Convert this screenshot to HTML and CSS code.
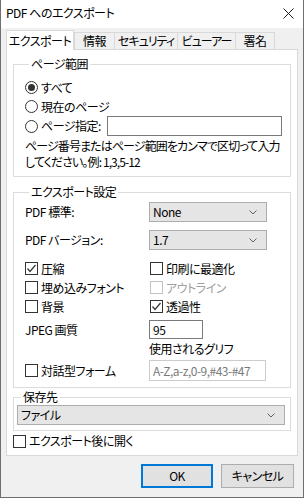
FILE: index.html
```html
<!DOCTYPE html>
<html lang="ja">
<head>
    <meta charset="UTF-8">
    <title>PDF へのエクスポート</title>
    <link rel="stylesheet" href="styles.css">
</head>
<body>
<div class="window">
    <div class="titlebar">
        <span class="title">PDF へのエクスポート</span>
        <svg class="close" width="11" height="11" viewBox="0 0 11 11">
            <path d="M0.5 0.5 L10.5 10.5 M10.5 0.5 L0.5 10.5" stroke="#1a1a1a" stroke-width="1" fill="none"/>
        </svg>
    </div>

    <div class="tabs">
        <div class="tab active">エクスポート</div>
        <div class="tab first w-info">情報</div>
        <div class="tab w-sec">セキュリティ</div>
        <div class="tab w-view">ビューアー</div>
        <div class="tab w-sign">署名</div>
    </div>

    <div class="panel">
        <!--ページ範囲-->
        <fieldset class="group range">
            <legend>ページ範囲</legend>
            <div class="radio-row"><span class="radio on"></span>すべて</div>
            <div class="radio-row"><span class="radio"></span>現在のページ</div>
            <div class="radio-row spec">
                <span class="radio"></span>ページ指定:
                <span class="textbox pages"></span>
            </div>
            <p class="hint">ページ番号またはページ範囲をカンマで区切って入力<br>してください。例: 1,3,5-12</p>
        </fieldset>

        <!--エクスポート設定-->
        <fieldset class="group settings">
            <legend>エクスポート設定</legend>
            <div class="row sel-row first-sel">
                <div class="col">PDF 標準:</div>
                <div class="select small">None<svg class="chev" width="8" height="5" viewBox="0 0 8 5"><polyline points="0.5,0.5 4,4 7.5,0.5" fill="none" stroke="#606060"/></svg></div>
            </div>
            <div class="row sel-row">
                <div class="col">PDF バージョン:</div>
                <div class="select small">1.7<svg class="chev" width="8" height="5" viewBox="0 0 8 5"><polyline points="0.5,0.5 4,4 7.5,0.5" fill="none" stroke="#606060"/></svg></div>
            </div>
            <div class="row chk-row first-chk">
                <div class="col"><span class="box"><svg width="11" height="11" viewBox="0 0 11 11"><polyline points="1.5,5.5 4,8.5 9.5,2" fill="none" stroke="#333" stroke-width="1.2"/></svg></span>圧縮</div>
                <div class="col2"><span class="box"></span>印刷に最適化</div>
            </div>
            <div class="row chk-row">
                <div class="col"><span class="box"></span>埋め込みフォント</div>
                <div class="col2 disabled"><span class="box"></span>アウトライン</div>
            </div>
            <div class="row chk-row">
                <div class="col"><span class="box"></span>背景</div>
                <div class="col2"><span class="box"><svg width="11" height="11" viewBox="0 0 11 11"><polyline points="1.5,5.5 4,8.5 9.5,2" fill="none" stroke="#333" stroke-width="1.2"/></svg></span>透過性</div>
            </div>
            <div class="row jpeg-row">
                <div class="col">JPEG 画質</div>
                <div class="textbox jpeg">95</div>
            </div>
            <div class="row glyph-label">
                <div class="col"></div>
                <div>使用されるグリフ</div>
            </div>
            <div class="row form-row">
                <div class="col"><span class="box"></span>対話型フォーム</div>
                <div class="textbox glyphs">A-Z,a-z,0-9,#43-#47</div>
            </div>
        </fieldset>

        <!--保存先-->
        <fieldset class="group dest">
            <legend>保存先</legend>
            <div class="select wide">ファイル<svg class="chev" width="8" height="5" viewBox="0 0 8 5"><polyline points="0.5,0.5 4,4 7.5,0.5" fill="none" stroke="#606060"/></svg></div>
        </fieldset>

        <div class="open-row"><span class="box"></span>エクスポート後に開く</div>
    </div>

    <div class="buttons">
        <div class="btn default">OK</div>
        <div class="btn">キャンセル</div>
    </div>
</div>
</body>
</html>
```

FILE: styles.css
```css
* {
    margin: 0;
    padding: 0;
    box-sizing: border-box;
}

body {
    background: #f0f0f0;
    font-family: "Noto Sans CJK JP", "Noto Sans", sans-serif;
    font-size: 12px;
    font-feature-settings: "palt";
    letter-spacing: -0.5px;
    white-space: nowrap;
    color: #000;
}

.window {
    width: 304px;
    height: 498px;
    background: #f0f0f0;
    border-left: 1px solid #6f6f6f;
    border-right: 1px solid #6f6f6f;
    border-bottom: 1px solid #6f6f6f;
}

/*タイトルバー*/
.titlebar {
    height: 28px;
    background: #fff;
    display: flex;
    align-items: center;
    padding: 0 9px 2px 5px;
}

.title {
    line-height: 16px;
    flex: 1;
}

.close {
    display: block;
}

/*タブ*/
.tabs {
    display: flex;
    align-items: flex-end;
    height: 22px;
    padding-left: 5px;
    margin-bottom: -1px;
}

.tab {
    height: 17px;
    margin-bottom: 1px;
    border-top: 1px solid #d9d9d9;
    border-right: 1px solid #d9d9d9;
    background: #f0f0f0;
    text-align: center;
    line-height: 15px;
    overflow: hidden;
}

.tab.first {
    border-left: 1px solid #d9d9d9;
}

.tab.active {
    width: 68px;
    height: 20px;
    margin-bottom: 0;
    background: #fff;
    border: 1px solid #d9d9d9;
    border-bottom: none;
    line-height: 19px;
    position: relative;
    z-index: 1;
}

.w-info { width: 41px; }
.w-sec { width: 63px; letter-spacing: -1px; }
.w-view { width: 58px; letter-spacing: -1px; }
.w-sign { width: 39px; }

/*パネル*/
.panel {
    height: 407px;
    margin: 0 5px 0 5px;
    background: #fff;
    border: 1px solid #d9d9d9;
    padding: 0 6px 0 6px;
}

.group {
    border: 1px solid #dcdcdc;
    min-width: 0;
}

.group legend {
    line-height: 16px;
    padding: 0 2px;
    margin-left: 4px;
}

.range {
    margin-top: 6px;
    padding: 6px 8px 6px 11px;
}

.radio-row {
    display: flex;
    align-items: center;
    height: 19px;
    line-height: 16px;
}

.radio-row.spec {
    height: 20px;
}

.radio {
    width: 13px;
    height: 13px;
    border: 1px solid #333;
    border-radius: 50%;
    margin-right: 3px;
    display: flex;
    align-items: center;
    justify-content: center;
    flex: none;
}

.radio.on::after {
    content: "";
    width: 7px;
    height: 7px;
    border-radius: 50%;
    background: #333;
}

.textbox {
    height: 20px;
    border: 1px solid #7a7a7a;
    background: #fff;
    line-height: 18px;
    padding-left: 3px;
}

.textbox.pages {
    width: 175px;
    margin-left: auto;
}

.hint {
    margin-top: 2px;
    line-height: 16px;
    letter-spacing: -0.9px;
}

/*エクスポート設定*/
.settings {
    margin-top: 7px;
    padding: 2px 8px 6px 11px;
}

.row {
    display: flex;
    align-items: center;
    height: 19px;
    line-height: 16px;
}

.col {
    width: 124px;
    display: flex;
    align-items: center;
}

.col2 {
    display: flex;
    align-items: center;
    margin-left: 1px;
}

.sel-row {
    height: 20px;
    margin-top: 8px;
}

.sel-row.first-sel {
    margin-top: 0;
}

.chk-row.first-chk {
    margin-top: 9px;
}

.jpeg-row {
    margin-top: 4px;
}

.glyph-label {
    height: 20px;
}

.form-row {
    height: 21px;
    margin-top: 1px;
}

.box {
    width: 13px;
    height: 13px;
    border: 1px solid #333;
    background: #fff;
    margin-right: 3px;
    flex: none;
    display: flex;
}

.disabled {
    color: #a0a0a0;
}

.disabled .box {
    border-color: #c4c4c4;
}

.select {
    height: 20px;
    border: 1px solid #adadad;
    background: #e5e5e5;
    display: flex;
    align-items: center;
    padding: 0 9px 0 3px;
    line-height: 16px;
}

.select .chev {
    margin-left: auto;
}

.select.small {
    width: 118px;
}

.textbox.jpeg {
    width: 54px;
    height: 19px;
    line-height: 17px;
}

.textbox.glyphs {
    width: 117px;
    height: 21px;
    border-color: #cccccc;
    color: #7a7a7a;
    line-height: 19px;
}

/*保存先*/
.dest {
    margin-top: 1px;
    padding: 0 5px 5px 3px;
}

.select.wide {
    width: 100%;
    padding-left: 3px;
}

.open-row {
    display: flex;
    align-items: center;
    height: 18px;
    margin-top: 1px;
    line-height: 16px;
}

/*ボタン*/
.buttons {
    display: flex;
    justify-content: flex-end;
    gap: 8px;
    margin-top: 8px;
    padding-right: 9px;
}

.btn {
    width: 73px;
    height: 24px;
    border: 1px solid #adadad;
    background: #e1e1e1;
    display: flex;
    align-items: center;
    justify-content: center;
    line-height: 16px;
}

.btn.default {
    width: 72px;
    border: 2px solid #0078d7;
}
```
